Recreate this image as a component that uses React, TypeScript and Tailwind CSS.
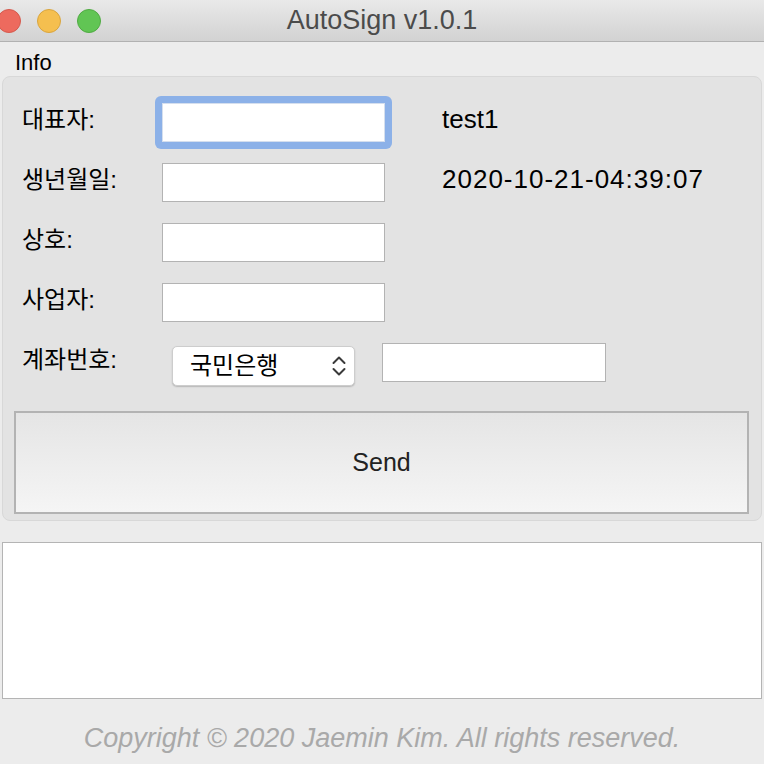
import React from "react";

const TrafficLights = () => (
  <div className="flex items-center gap-[16px] -ml-[3px]">
    <span className="block h-6 w-6 rounded-full bg-[#ed6a5e] border border-[#d55a4e]" />
    <span className="block h-6 w-6 rounded-full bg-[#f5bf4f] border border-[#d9a53e]" />
    <span className="block h-6 w-6 rounded-full bg-[#61c554] border border-[#50ab43]" />
  </div>
);

const Chevrons = () => (
  <svg width="16" height="24" viewBox="0 0 16 24" fill="none" stroke="#3a3a3a" strokeWidth="2" strokeLinecap="round" strokeLinejoin="round">
    <path d="M2.5 9 L8 3.5 L13.5 9" />
    <path d="M2.5 15 L8 20.5 L13.5 15" />
  </svg>
);

const TextBox = () => (
  <input className="h-[39px] w-[223px] border border-[#b3b3b3] bg-white outline-none" />
);

const FormRow = ({ label, children }: { label: string; children?: React.ReactNode }) => (
  <div className="flex h-[60px] items-center">
    <div className="-mt-[5px] w-[148px] pl-2 text-[24px] leading-none text-black">{label}</div>
    {children}
  </div>
);

export default function App() {
  return (
    <div className="flex h-[764px] w-[764px] flex-col overflow-hidden bg-[#ececec] font-['Liberation_Sans','Noto_Sans_CJK_KR',sans-serif]">
      {/* title bar */}
      <div className="grid h-[42px] grid-cols-[1fr_auto_1fr] items-center border-b border-[#b1b1b1] bg-gradient-to-b from-[#e9e9e9] to-[#d2d2d2]">
        <TrafficLights />
        <div className="text-[27px] leading-none text-[#4b4b4b]">AutoSign v1.0.1</div>
        <div />
      </div>

      {/* menu */}
      <div className="flex h-[34px] items-center pl-[15px] pt-[7px] text-[22px] leading-none text-black">Info</div>

      {/* group panel */}
      <div className="mx-[2px] rounded-[8px] border border-[#d8d8d8] bg-[#e3e3e3] pb-[6px] pl-[11px] pr-[12px] pt-[15px]">
        <FormRow label="대표자:">
          <div className="-m-[7px] rounded-[6px] bg-[#8cb1e8] p-[7px]">
            <input className="block h-[39px] w-[223px] border border-[#d5dfee] bg-white outline-none" />
          </div>
          <div className="-mt-[7px] ml-[57px] text-[26px] leading-none text-black">test1</div>
        </FormRow>
        <FormRow label="생년월일:">
          <TextBox />
          <div className="-mt-[7px] ml-[57px] text-[26px] leading-none tracking-[1px] text-black">2020-10-21-04:39:07</div>
        </FormRow>
        <FormRow label="상호:">
          <TextBox />
        </FormRow>
        <FormRow label="사업자:">
          <TextBox />
        </FormRow>
        <FormRow label="계좌번호:">
          <div className="ml-[10px] mt-[7px] flex h-[40px] w-[183px] items-center justify-between rounded-[5px] border border-[#cdcdcd] bg-white pl-[17px] pr-[7px] shadow-[0_1px_1.5px_rgba(0,0,0,0.2)]">
            <span className="text-[24px] leading-none text-black">국민은행</span>
            <Chevrons />
          </div>
          <input className="ml-[27px] h-[39px] w-[224px] border border-[#b3b3b3] bg-white outline-none" />
        </FormRow>

        <button className="mt-[19px] flex h-[103px] w-full items-center justify-center border-2 border-[#b3b3b3] bg-gradient-to-b from-[#e5e5e5] to-[#f5f5f5] text-[25px] leading-none text-[#222]">
          Send
        </button>
      </div>

      {/* log area */}
      <div className="mx-[2px] mt-[21px] h-[157px] border border-[#b4b4b4] bg-white" />

      {/* footer */}
      <div className="pt-[24px] text-center text-[27px] italic leading-[30px] text-[#a9a9a9]">
        Copyright © 2020 Jaemin Kim. All rights reserved.
      </div>
    </div>
  );
}
